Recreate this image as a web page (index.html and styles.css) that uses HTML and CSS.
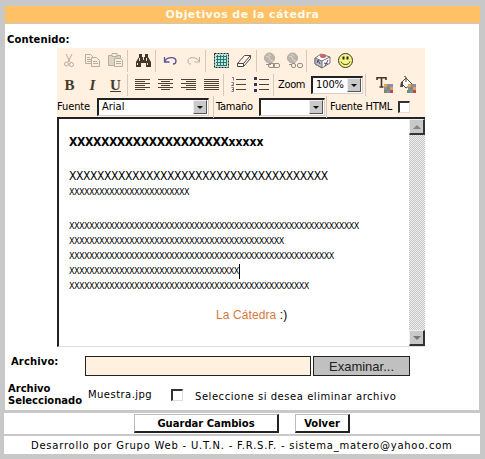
FILE: index.html
```html
<!DOCTYPE html>
<html lang="es">
<head>
<meta charset="utf-8">
<title>Objetivos de la cátedra</title>
<link rel="stylesheet" href="styles.css">
</head>
<body>
<h1 class="title">Objetivos de la cátedra</h1>
<main class="panel">
  <div class="label content-label">Contenido:</div>
  <section class="editor">
    <div class="toolbar row-a">
      <span class="tool"><svg viewBox="0 0 17 17" class="dim"><path d="M5 2l4 8M11 2L7 10"/><circle cx="5.5" cy="12" r="2"/><circle cx="10.500" cy="12.500" r="2"/></svg></span>
      <span class="tool"><svg viewBox="0 0 17 17" class="dim"><path d="M1.500 2.500h5l2 2v7h-7zM3 5.500h3M3 7.500h4M3 9.500h4"/><path class="paper" d="M7.500 5.500h5l3 3v6h-8z"/><path d="M9 9.500h4M9 11.500h5"/></svg></span>
      <span class="tool"><svg viewBox="0 0 17 17" class="dim"><path class="board" d="M1.500 3.500h12v10h-12z"/><path class="paper" d="M5 1.500h5v3H5zM7.500 6.500h6l2 2v6h-8z"/><path d="M9 9.500h5M9 11.500h5"/></svg></span>
      <i class="sep"></i>
      <span class="tool"><svg viewBox="0 0 17 17"><path fill="#40372c" d="M4 2h3v3h3V2h3v3l3 5v5h-5v-4H6v4H1v-5l3-5z"/><path stroke="#eee4d4" d="M4.500 6v3M2.500 11v2M11.500 6v3M12.500 11v2M8.500 5v3"/></svg></span>
      <i class="sep narrow"></i>
      <span class="tool"><svg viewBox="0 0 17 17"><path class="undo" d="M2.500 5v5h5M3 9c2-4 11-5 11 0 0 2-1 3-3 3"/></svg></span>
      <span class="tool"><svg viewBox="0 0 17 17" class="dim"><path d="M14.500 5v5h-5M14 9C12 5 3 4 3 9c0 2 1 3 3 3"/></svg></span>
      <i class="sep"></i>
      <span class="tool"><svg viewBox="0 0 17 17"><path fill="#bfe5df" stroke="#222" stroke-dasharray="2 1" d="M1.500 1.500h14v14h-14z"/><path stroke="#28786f" fill="none" d="M4.500 3v11M7.500 3v11M10.500 3v11M13.500 3v11M3 4.500h11M3 7.500h11M3 10.500h11M3 13.500h11"/></svg></span>
      <span class="tool"><svg viewBox="0 0 17 17"><path fill="#fff" stroke="#51483e" d="M1.500 11.500l7-8h6v3l-7 8h-6zM1.500 11.500h6l7-8M7.500 11.500v3"/></svg></span>
      <i class="sep narrow"></i>
      <span class="tool"><svg viewBox="0 0 17 17" class="globe"><circle cx="6.500" cy="6" r="5"/><path class="shine" d="M3 4l3 1 1 3 3 1M5 2l3 2"/><path class="stand" d="M3 12.500h5"/><rect x="5.500" y="11.500" width="6" height="4" rx="1.500"/><rect x="10.500" y="11.500" width="6" height="4" rx="1.500"/></svg></span>
      <span class="tool"><svg viewBox="0 0 17 17" class="globe"><circle cx="6.500" cy="6" r="5"/><path class="shine" d="M3 4l3 1 1 3 3 1M5 2l3 2"/><path class="stand" d="M3 12.500h3"/><rect x="5.500" y="11.500" width="4" height="4" rx="1.500"/><rect x="11.500" y="11.500" width="5" height="4" rx="1.500"/></svg></span>
      <i class="sep"></i>
      <span class="tool"><svg viewBox="0 0 17 17"><path fill="#fff" stroke="#77706c" d="M1 6l6-4 9 3v6l-8 5-7-4z"/><path fill="#bdb8c5" stroke="#77706c" d="M1 6l7 3v7l-7-4zM8 9l8-4"/><ellipse cx="9" cy="4" rx="3" ry="2" fill="#c26773"/><path stroke="#4b5079" fill="none" d="M3 11l1-3 2 4M10 11l4 1M14 8l-3 6"/></svg></span>
      <span class="tool"><svg viewBox="0 0 17 17"><circle cx="8.500" cy="8.500" r="7" fill="#f4f582" stroke="#3b3b20"/><path stroke="#222" stroke-width="2" d="M6.500 4.500v3M10.500 4.500v3"/><path stroke="#444422" fill="none" d="M4 9.500c1 4 8 4 9 0"/></svg></span>
    </div>
    <div class="toolbar row-b">
      <b class="tool letter">B</b><b class="tool letter italic">I</b><b class="tool letter underline">U</b>
      <i class="sep narrow"></i>
      <span class="tool"><svg viewBox="0 0 17 17" class="lines"><path d="M1 3.500h15M1 5.500h10M1 7.500h15M1 9.500h10M1 11.500h15M1 13.500h10"/></svg></span>
      <span class="tool"><svg viewBox="0 0 17 17" class="lines"><path d="M1 3.500h15M4 5.500h9M1 7.500h15M4 9.500h9M1 11.500h15M4 13.500h9"/></svg></span>
      <span class="tool"><svg viewBox="0 0 17 17" class="lines"><path d="M1 3.500h15M6 5.500h10M1 7.500h15M6 9.500h10M1 11.500h15M6 13.500h10"/></svg></span>
      <span class="tool"><svg viewBox="0 0 17 17" class="lines"><path d="M1 3.500h15M1 5.500h15M1 7.500h15M1 9.500h15M1 11.500h15M1 13.500h15"/></svg></span>
      <i class="sep narrow"></i>
      <span class="tool"><svg viewBox="0 0 17 17" class="lines"><path d="M6 3.500h10M6 8.500h10M6 13.500h10"/><path class="numbers" d="M2 1.500h1.500v3M1.500 6.500h2v2l-2 1h2.500M1.500 11.500h2v4h-2M2 13.500h2"/></svg></span>
      <span class="tool"><svg viewBox="0 0 17 17" class="lines"><path d="M6 3.500h10M6 8.500h10M6 13.500h10"/><path fill="#39345a" stroke="none" d="M1 1h3v3H1zM1 7h3v3H1zM1 13h3v3H1z"/></svg></span>
      <i class="sep narrow"></i>
      <span class="caption zoom-label">Zoom</span>
      <span class="select zoom"><span>100%</span><i class="arrow"></i></span>
      <i class="sep zoom-end"></i>
      <span class="tool"><svg viewBox="0 0 17 17"><path stroke="#40372c" stroke-width="1.600" fill="none" d="M1 4V1.800h9V4M5.500 2v9M3.500 11h4"/><path fill="#9a83a8" d="M8 8h9v9H8z"/><path fill="#d8a84c" d="M8 8h3v3H8zM14 11h3v3h-3z"/><path fill="#64966b" d="M11 11h3v3h-3zM8 14h3v3H8z"/><path fill="#b94762" d="M14 14h3v3h-3z"/></svg></span>
      <span class="tool"><svg viewBox="0 0 17 17"><path fill="#fff" stroke="#51483e" d="M2 7l5-5 6 6-6 4zM7 6V1L5 0"/><path fill="#51483e" d="M2 6l2-1v6H1z"/><path fill="#9a83a8" d="M9 8h8v9H9z"/><path fill="#d8a84c" d="M9 8h3v3H9zM14 11h3v3h-3z"/><path fill="#64966b" d="M11 11h3v3h-3zM8 14h3v3H8z"/><path fill="#b94762" d="M14 14h3v3h-3z"/></svg></span>
    </div>
    <div class="toolbar row-c">
      <span class="caption font-label">Fuente</span>
      <span class="select font"><span>Arial</span><i class="arrow"></i></span>
      <i class="sep"></i>
      <span class="caption size-label">Tamaño</span>
      <span class="select size"><span></span><i class="arrow"></i></span>
      <i class="sep html-sep"></i>
      <span class="caption html-label">Fuente HTML</span>
      <span class="check"></span>
    </div>
    <div class="document">
      <div class="page">
        <p class="heading">XXXXXXXXXXXXXXXXXXXX<span>xxxxx</span></p>
        <p class="large">XXXXXXXXXXXXXXXXXXXXXXXXXXXXXXXXXXXXX</p>
        <p class="small">XXXXXXXXXXXXXXXXXXXXXXXX</p>
        <div class="block">
          <p class="small">XXXXXXXXXXXXXXXXXXXXXXXXXXXXXXXXXXXXXXXXXXXXXXXXXXXXXXXXXX</p>
          <p class="small">XXXXXXXXXXXXXXXXXXXXXXXXXXXXXXXXXXXXXXXXXXX</p>
          <p class="small">XXXXXXXXXXXXXXXXXXXXXXXXXXXXXXXXXXXXXXXXXXXXXXXXXXXXX</p>
          <p class="small"><span class="caret">XXXXXXXXXXXXXXXXXXXXXXXXXXXXXXXXXX</span></p>
          <p class="small">XXXXXXXXXXXXXXXXXXXXXXXXXXXXXXXXXXXXXXXXXXXXXXXX</p>
        </div>
        <p class="signature"><span>La Cátedra</span> :)</p>
      </div>
      <div class="scrollbar"><i class="scroll-button up"></i><i class="scroll-button down"></i></div>
    </div>
  </section>
  <div class="file-row">
    <span class="label">Archivo:</span><span class="file-input"></span><span class="browse">Examinar...</span>
  </div>
  <div class="selected-row">
    <span class="label">Archivo<br>Seleccionado</span><span class="filename">Muestra.jpg</span><span class="check"></span><span class="hint">Seleccione si desea eliminar archivo</span>
  </div>
</main>
<div class="actions"><span class="button save">Guardar Cambios</span><span class="button back">Volver</span></div>
<footer class="footer">Desarrollo por Grupo Web - U.T.N. - F.R.S.F. - sistema_matero@yahoo.com</footer>
</body>
</html>
```
FILE: styles.css
```css
* { box-sizing: border-box; }
body {
  margin: 0;
  width: 485px;
  height: 459px;
  padding: 6px 5px 0 4px;
  overflow: hidden;
  background: #c8c8c8;
  color: #000;
  font: 10px/12px "DejaVu Sans", sans-serif;
  white-space: nowrap;
}
p { margin: 0; }
.title {
  height: 17px;
  margin: 0 0 1px 1px;
  background: #ffc066;
  color: #fffbed;
  font-size: 11px;
  line-height: 17px;
  letter-spacing: .42px;
  text-align: center;
}
.panel { height: 386px; margin: 0 1px 0 1px; background: #fff; overflow: hidden; }
.label { font-weight: bold; font-size: 10px; letter-spacing: -.02px; }
.content-label { height: 24px; padding: 10px 0 0 2px; letter-spacing: .12px; }
.editor { width: 368px; margin-left: 52px; }
.toolbar { display: flex; align-items: center; padding-left: 1px; background: #fff0df; }
.row-a { height: 25px; }
.row-b { height: 23px; }
.row-c { height: 21px; padding-left: 0; }
.tool { flex: none; width: 23px; height: 20px; display: flex; align-items: center; justify-content: center; }
.tool svg { display: block; width: 17px; height: 17px; }
.dim { fill: none; stroke: #b9ada0; }
.dim .paper { fill: #f8eee2; }
.dim .board { fill: #ded4c8; }
.undo { fill: none; stroke: #59519a; stroke-width: 1.3; }
.globe { fill: #bdb5ad; stroke: #b3aaa1; }
.globe rect, .globe path { fill: none; stroke: #958c84; }
.globe .shine { stroke: #ded6cd; }
.lines { fill: none; stroke: #4b4335; }
.lines .numbers { stroke: #5c5680; stroke-width: .8; }
.sep { flex: none; width: 5px; height: 22px; border-left: 1px solid #d7c9ba; border-right: 3px solid transparent; }
.narrow { width: 4px; }
.letter { color: #443b2e; font: bold 15px/20px "Liberation Serif", serif; }
.italic { font-style: italic; }
.underline { text-decoration: underline; }
.caption { font: 11px/14px "DejaVu Sans Condensed", "DejaVu Sans", sans-serif; letter-spacing: -.35px; }
.zoom-label { width: 34px; padding-left: 1px; }
.select {
  display: flex;
  align-items: center;
  justify-content: space-between;
  height: 18px;
  padding: 0 1px 0 3px;
  background: #fff;
  border: 1px solid #d5d0ca;
  border-top: 2px solid #222;
  border-left: 2px solid #222;
  font: 11px/14px "DejaVu Sans Condensed", "DejaVu Sans", sans-serif;
}
.zoom { width: 52px; letter-spacing: -.1px; }
.font { width: 112px; }
.size { width: 66px; }
.arrow {
  width: 14px;
  height: 14px;
  display: flex;
  align-items: center;
  justify-content: center;
  background: #c9c9c9;
  border: 1px solid #eee;
  border-right-color: #555;
  border-bottom-color: #555;
}
.arrow::before { content: ""; border: 3px solid transparent; border-top-color: #111; border-bottom: 0; }
.zoom-end { width: 8px; margin-left: 2px; }
.font-label { width: 40px; letter-spacing: -.1px; }
.row-c .sep { margin-left: 4px; width: 3px; border-right-width: 2px; }
.size-label { width: 43px; letter-spacing: -.25px; }
.row-c .html-sep { margin-left: 1px; width: 4px; }
.html-label { width: 68px; letter-spacing: -.2px; }
.check { width: 12px; height: 12px; background: #fff; border: 1px solid #ddd; border-top: 2px solid #333; border-left: 2px solid #333; }
.document { display: flex; height: 230px; border-top: 2px solid #222; border-left: 2px solid #222; border-bottom: 1px solid #ddd; background: #fff; }
.page { width: 350px; padding: 15px 0 0 10px; font-family: "DejaVu Sans Condensed", "DejaVu Sans", sans-serif; }
.heading { height: 34px; font-size: 12px; line-height: 17px; font-weight: bold; letter-spacing: -.35px; }
.heading span { letter-spacing: 0; }
.large { height: 17px; font-size: 12px; line-height: 17px; letter-spacing: -.4px; }
.small { height: 15px; font-size: 9px; line-height: 15px; letter-spacing: -.55px; }
.block { margin-top: 19px; }
.caret { display: inline-block; border-right: 1px solid #000; }
.signature { padding: 13px 0 0 147px; font: 12px/16px "Liberation Sans", sans-serif; letter-spacing: .1px; }
.signature span { color: #d8793b; }
.scrollbar {
  width: 16px;
  display: flex;
  flex-direction: column;
  justify-content: space-between;
  background: repeating-conic-gradient(#c5c5c5 0 25%, #efefef 0 50%) 0 0 / 2px 2px;
}
.scroll-button { display: flex; align-items: center; justify-content: center; height: 16px; background: #c8c8c8; border: 1px solid #eee; border-right: 2px solid #333; border-bottom: 2px solid #333; }
.scroll-button::before { content: ""; border: 4px solid transparent; }
.up::before { border-bottom-color: #858585; border-top: 0; }
.down::before { border-top-color: #777; border-bottom: 0; }
.file-row { display: flex; height: 29px; padding-top: 9px; }
.file-row .label { width: 80px; padding-left: 6px; line-height: 11px; letter-spacing: .12px; }
.file-input { width: 226px; height: 20px; background: #fff0df; border: 1px solid #222; }
.browse { width: 97px; height: 20px; margin-left: 2px; background: #c0c0c0; border: 1px solid #222; font: 13px/19px "Liberation Sans", sans-serif; color: #222; text-align: center; }
.selected-row { display: flex; align-items: flex-start; height: 34px; padding-top: 7px; }
.selected-row .label { width: 81px; padding-left: 3px; }
.filename { width: 85px; padding: 6px 0 0 2px; letter-spacing: .45px; }
.selected-row .check { margin-top: 6px; }
.hint { padding: 8px 0 0 12px; letter-spacing: .54px; }
.actions { display: flex; height: 21px; margin: 3px 0 2px; padding: 1px 0 0 130px; background: #fff; }
.button { height: 19px; border: 1px solid #bbb; border-right: 2px solid #222; border-bottom: 2px solid #222; background: #fff; font-weight: bold; font-size: 10px; line-height: 17px; text-align: center; }
.save { width: 145px; }
.back { width: 55px; margin-left: 16px; }
.footer { height: 18px; background: #fff; padding-left: 27px; line-height: 19px; letter-spacing: .76px; }
```
